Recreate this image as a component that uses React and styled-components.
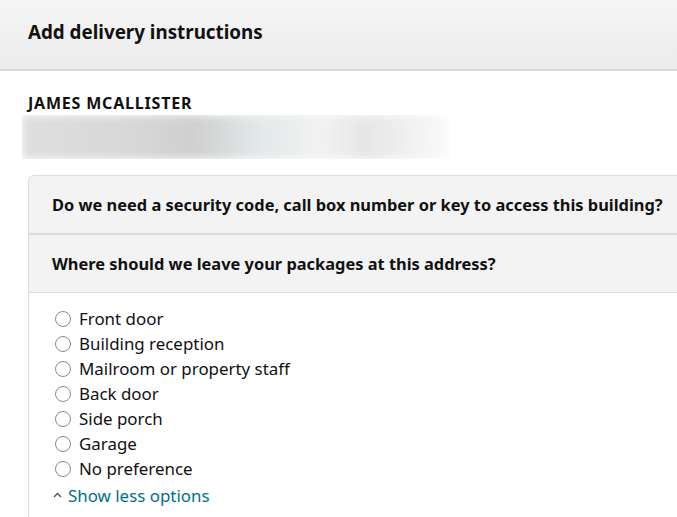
import styled, { createGlobalStyle } from "styled-components";

const GlobalStyle = createGlobalStyle`
  html, body {
    margin: 0;
    padding: 0;
    background: #fff;
    overflow: hidden;
  }
  body {
    font-family: "Noto Sans", "Liberation Sans", Arial, sans-serif;
    color: #0f1111;
  }
`;

const Page = styled.div`
  width: 677px;
  height: 517px;
  overflow: hidden;
`;

const Header = styled.div`
  height: 69px;
  display: flex;
  align-items: center;
  padding: 0 28px;
  background: linear-gradient(to bottom, #f6f6f6, #ebebeb);
  border-bottom: 2px solid #d9d9d9;
`;

const Title = styled.h1`
  margin: 0;
  font-size: 18.8px;
  font-weight: 700;
  color: #111;
  padding-bottom: 6px;
`;

const Body = styled.div`
  padding: 22px 0 0 28px;
`;

const Name = styled.div`
  font-size: 16px;
  font-weight: 700;
  letter-spacing: 0.8px;
  color: #111;
  line-height: 20px;
`;

const AddressLine = styled.div`
  margin: 2px 0 0 -6px;
  width: 428px;
  height: 44px;
  overflow: hidden;
`;

const Blur = styled.div`
  height: 100%;
  background: linear-gradient(
    to right,
    #dedede 0%,
    #d8d8d8 25%,
    #cfcfcf 40%,
    #e2e8e8 55%,
    #f2f2f2 70%,
    #e6e6e6 80%,
    #fafafa 100%
  );
  filter: blur(4px);
`;

const Card = styled.div`
  margin-top: 16px;
  width: 680px;
  border: 1px solid #dcdcdc;
  border-right: none;
  border-bottom: none;
  border-radius: 6px 0 0 0;
  overflow: hidden;
`;

const Question = styled.div`
  height: 57px;
  display: flex;
  align-items: center;
  padding: 0 23px;
  background: #f3f3f3;
  font-size: 16.4px;
  font-weight: 700;
  color: #111;
  white-space: nowrap;
  border-bottom: 2px solid #dcdcdc;
  &:nth-child(2) {
    border-bottom-width: 1px;
  }
`;

const Options = styled.div`
  padding: 13px 24px 30px;
  display: flex;
  flex-direction: column;
`;

const Option = styled.label`
  display: flex;
  align-items: center;
  height: 25px;
  font-size: 16.9px;
  color: #111;
`;

const Radio = styled.span`
  flex: none;
  width: 16px;
  height: 16px;
  border: 1px solid #8a8a8a;
  border-radius: 50%;
  margin: 0 8px 0 2px;
  background: #fff;
  box-sizing: border-box;
`;

const ShowLess = styled.a`
  display: flex;
  align-items: center;
  height: 28px;
  font-size: 16.9px;
  color: #007185;
  text-decoration: none;
  gap: 6px;
`;

const options = [
  "Front door",
  "Building reception",
  "Mailroom or property staff",
  "Back door",
  "Side porch",
  "Garage",
  "No preference",
];

export default function App() {
  return (
    <>
      <GlobalStyle />
      <Page>
        <Header>
          <Title>Add delivery instructions</Title>
        </Header>
        <Body>
          <Name>JAMES MCALLISTER</Name>
          <AddressLine>
            <Blur />
          </AddressLine>
          <Card>
            <Question>
              Do we need a security code, call box number or key to access this
              building?
            </Question>
            <Question>Where should we leave your packages at this address?</Question>
            <Options>
              {options.map((o) => (
                <Option key={o}>
                  <Radio />
                  {o}
                </Option>
              ))}
              <ShowLess href="#">
                <svg width="9" height="6" viewBox="0 0 9 6">
                  <path
                    d="M1 5 L4.5 1.5 L8 5"
                    fill="none"
                    stroke="#555"
                    strokeWidth="1.4"
                  />
                </svg>
                Show less options
              </ShowLess>
            </Options>
          </Card>
        </Body>
      </Page>
    </>
  );
}
